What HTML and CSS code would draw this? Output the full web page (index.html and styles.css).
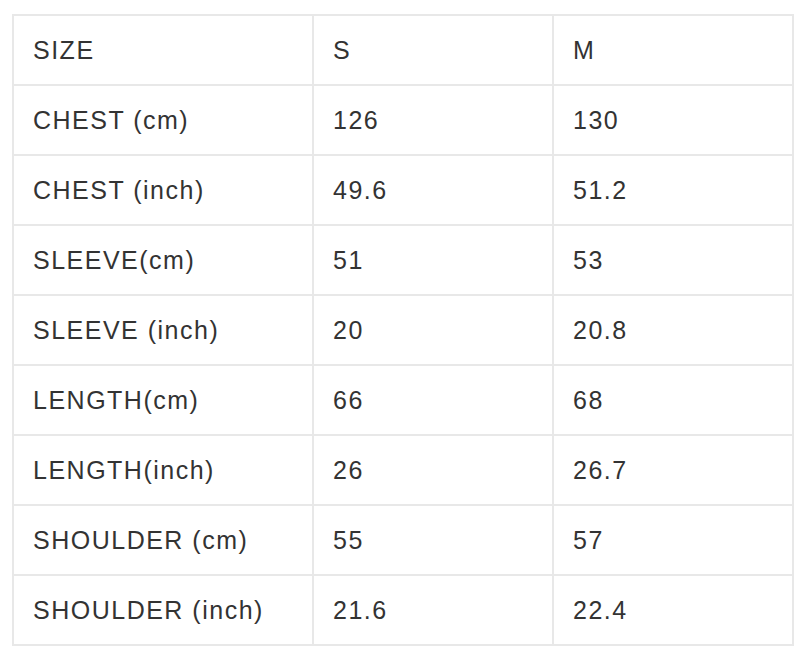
FILE: index.html
```html
<!DOCTYPE html>
<html>
<head>
<meta charset="utf-8">
<link rel="stylesheet" href="styles.css">
</head>
<body>
<table class="size-table">
  <colgroup><col class="c1"><col class="c2"><col class="c3"></colgroup>
  <tr><td>SIZE</td><td>S</td><td>M</td></tr>
  <tr><td>CHEST (cm)</td><td>126</td><td>130</td></tr>
  <tr><td>CHEST (inch)</td><td>49.6</td><td>51.2</td></tr>
  <tr><td>SLEEVE(cm)</td><td>51</td><td>53</td></tr>
  <tr><td>SLEEVE (inch)</td><td>20</td><td>20.8</td></tr>
  <tr><td>LENGTH(cm)</td><td>66</td><td>68</td></tr>
  <tr><td>LENGTH(inch)</td><td>26</td><td>26.7</td></tr>
  <tr><td>SHOULDER (cm)</td><td>55</td><td>57</td></tr>
  <tr><td>SHOULDER (inch)</td><td>21.6</td><td>22.4</td></tr>
</table>
</body>
</html>
```

FILE: styles.css
```css
html, body {
  margin: 0;
  padding: 0;
  background: #ffffff;
}
body {
  padding: 14px 0 0 12px;
}
.size-table {
  border-collapse: collapse;
  table-layout: fixed;
  width: 782px;
  font-family: "Liberation Sans", Arial, sans-serif;
  font-size: 25px;
  letter-spacing: 1.5px;
  color: #333333;
}
.c1 { width: 300px; }
.c2 { width: 240px; }
.c3 { width: 240px; }
.size-table td {
  border: 2px solid #e8e8e8;
  height: 68px;
  box-sizing: border-box;
  padding: 0 0 0 19px;
  vertical-align: middle;
}
.size-table tr { height: 70px; }
```
